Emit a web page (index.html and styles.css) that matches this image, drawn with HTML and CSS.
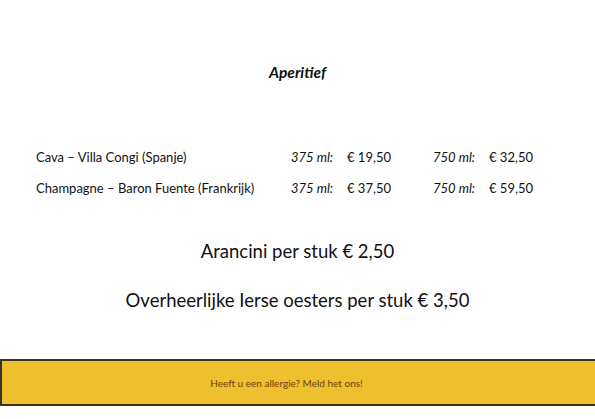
FILE: index.html
```html
<!DOCTYPE html>
<html lang="nl">
<head>
<meta charset="utf-8">
<link rel="stylesheet" href="styles.css">
</head>
<body>
<div class="page">
  <h1 class="title">Aperitief</h1>
  <div class="list">
    <div class="row">
      <span class="name">Cava – Villa Congi (Spanje)</span>
      <span class="vol">375 ml:</span><span class="price">€ 19,50</span>
      <span class="vol">750 ml:</span><span class="price">€ 32,50</span>
    </div>
    <div class="row">
      <span class="name">Champagne – Baron Fuente (Frankrijk)</span>
      <span class="vol">375 ml:</span><span class="price">€ 37,50</span>
      <span class="vol">750 ml:</span><span class="price">€ 59,50</span>
    </div>
  </div>
  <p class="big first">Arancini per stuk € 2,50</p>
  <p class="big">Overheerlijke Ierse oesters per stuk € 3,50</p>
  <div class="banner">Heeft u een allergie? Meld het ons!</div>
</div>
</body>
</html>
```
FILE: styles.css
```css
html, body { margin: 0; padding: 0; background: #fff; }
body { font-family: Lato, "Open Sans", sans-serif; color: #111; }
.page { width: 595px; height: 419px; overflow: hidden; padding-top: 62px; box-sizing: border-box; }
.title { margin: 0; text-align: center; font-size: 15.5px; font-weight: 700; font-style: italic; line-height: 20px; }
.list { margin-top: 66px; padding-left: 36px; display: flex; flex-direction: column; gap: 13px; }
.row { display: grid; grid-template-columns: 255px 56px 86px 56px 80px; font-size: 13px; line-height: 18px; }
.vol { font-style: italic; }
.big { margin: 0; text-align: center; font-size: 18.5px; line-height: 24px; }
.big.first { margin-top: 42px; margin-bottom: 25px; }
.banner { margin-top: 47px; margin-right: -4px; padding-right: 28px; height: 43px; background: #eebf2e; border: 2px solid #3a3320; border-right: none; box-sizing: content-box; display: flex; align-items: center; justify-content: center; font-size: 10px; color: #6e4310; }
```
